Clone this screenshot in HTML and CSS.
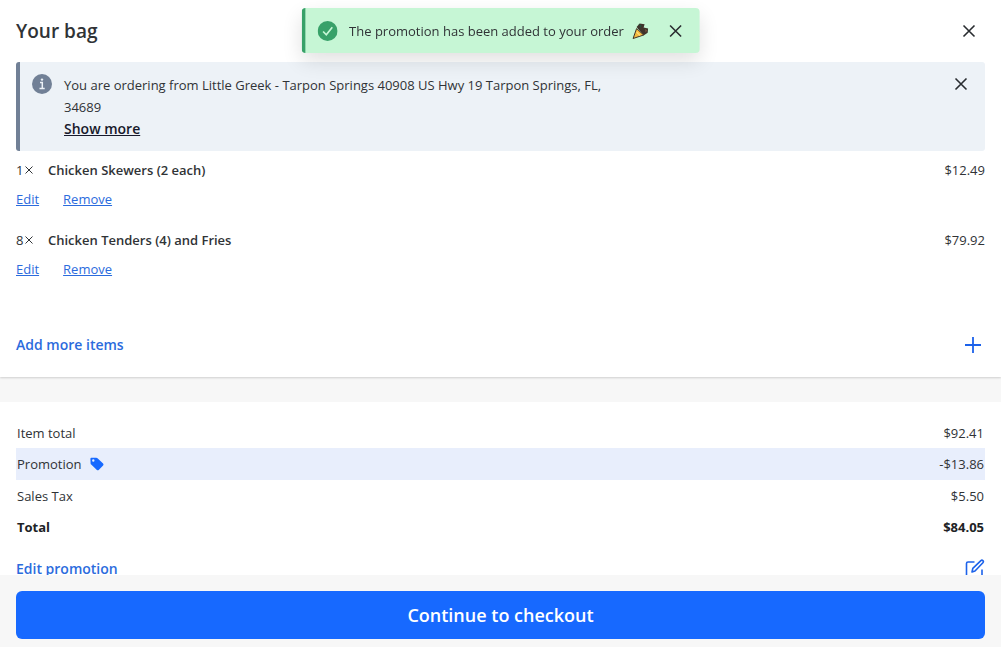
FILE: index.html
```html
<!DOCTYPE html>
<html lang="en">
<head>
<meta charset="utf-8">
<meta name="viewport" content="width=device-width, initial-scale=1">
<title>Your bag</title>
<link rel="stylesheet" href="styles.css">
</head>
<body>
<div class="bag">
  <main class="bag-scroll">
    <section class="order">
      <header class="bag-header">
        <h1 class="bag-title">Your bag</h1>
        <button class="icon-button" type="button" aria-label="Close bag">
          <svg class="cross" viewBox="0 0 14 14"><path d="M1.5 1.5l11 11M12.5 1.5l-11 11"/></svg>
        </button>
      </header>
      <div class="notice">
        <svg class="badge" viewBox="0 0 20 20"><circle cx="10" cy="10" r="10" fill="#718096"/><path d="M8 8.5h2.3v6M7.5 14.5h5.2" fill="none" stroke="#edf2f7" stroke-width="1.5"/><circle cx="10" cy="5.6" r="1.2" fill="#edf2f7"/></svg>
        <div class="notice-body">
          <p class="notice-text">You are ordering from Little Greek - Tarpon Springs 40908 US Hwy 19 Tarpon Springs, FL, 34689</p>
          <button class="show-more" type="button">Show more</button>
        </div>
        <button class="icon-button" type="button" aria-label="Dismiss notice">
          <svg class="cross" viewBox="0 0 14 14"><path d="M1.5 1.5l11 11M12.5 1.5l-11 11"/></svg>
        </button>
      </div>
      <ul class="items">
        <li class="item">
          <div class="item-line">
            <span class="quantity">1<svg class="times" viewBox="0 0 8 8"><path d="M.5.5l7 7M7.5.5l-7 7"/></svg></span>
            <span class="item-name">Chicken Skewers (2 each)</span>
            <span>$12.49</span>
          </div>
          <div class="item-actions"><a class="link" href="#">Edit</a><a class="link" href="#">Remove</a></div>
        </li>
        <li class="item">
          <div class="item-line">
            <span class="quantity">8<svg class="times" viewBox="0 0 8 8"><path d="M.5.5l7 7M7.5.5l-7 7"/></svg></span>
            <span class="item-name">Chicken Tenders (4) and Fries</span>
            <span>$79.92</span>
          </div>
          <div class="item-actions"><a class="link" href="#">Edit</a><a class="link" href="#">Remove</a></div>
        </li>
      </ul>
      <button class="action add-more" type="button">
        <span>Add more items</span>
        <svg class="action-icon" viewBox="0 0 24 24"><path d="M12 4v16M4 12h16" fill="none" stroke="#1c62ea" stroke-width="1.8"/></svg>
      </button>
    </section>
    <section class="summary">
      <table class="totals">
        <tbody>
          <tr><th scope="row">Item total</th><td>$92.41</td></tr>
          <tr class="promotion">
            <th scope="row"><span class="tagged">Promotion
              <svg class="tag" viewBox="0 0 14 14"><path fill="#1769ff" fill-rule="evenodd" d="M1.3.8l5-.1q.7 0 1.2.5l5.6 5.4q.9.9 0 1.8l-4.4 4.500q-.9.9-1.800 0L1.2 7.600Q.7 7.100.6 6.400L.4 1.900Q.4.8 1.300.8zM3.300 2.300a1.200 1.200 0 1 0 0 2.400a1.200 1.200 0 1 0 0-2.400z"/></svg></span></th>
            <td>-$13.86</td>
          </tr>
          <tr><th scope="row">Sales Tax</th><td>$5.50</td></tr>
          <tr class="total"><th scope="row">Total</th><td>$84.05</td></tr>
        </tbody>
      </table>
      <button class="action" type="button">
        <span>Edit promotion</span>
        <svg class="action-icon edit-icon" viewBox="0 0 20 20"><path d="M9.500 3H3q-1.500 0-1.500 1.500V17q0 1.500 1.500 1.500h12.500q1.500 0 1.500-1.500v-6.500M7 13l.8-3.600L15.900 1.600q1-.9 2 0t0 2.200L10 12z" fill="none" stroke="#1c62ea" stroke-width="1.600" stroke-linejoin="round"/></svg>
      </button>
    </section>
  </main>
  <footer class="bag-footer">
    <button class="checkout" type="button">Continue to checkout</button>
  </footer>
</div>
<div class="toast" role="status">
  <svg class="badge" viewBox="0 0 20 20"><circle cx="10" cy="10" r="10" fill="#38a169"/><path d="M5.500 10.500l3.200 3.300 6-7.600" fill="none" stroke="#c6f6d5" stroke-width="1.700"/></svg>
  <span class="toast-text">The promotion has been added to your order
    <svg class="popper" viewBox="0 0 18 18"><path d="M5 5l3-3.500 5 .8-1 3.200 4.500 1-.4 4.300-4.100 2.700z" fill="#3f332b"/><path d="M7 2l3 1.500-1 2.500z" fill="#244d3c"/><path d="M13.500 7l2 1.500-1.500 2z" fill="#80523d"/><path d="M5 6.500l7 6.500L1.500 16.500z" fill="#f4b83e" stroke="#3f332b" stroke-width="1" stroke-linejoin="round"/><path d="M5 10l3.500 3.500" stroke="#ffdb75" stroke-width="1.300"/></svg></span>
  <button class="icon-button" type="button" aria-label="Close message">
    <svg class="cross" viewBox="0 0 14 14"><path d="M1.5 1.5l11 11M12.5 1.5l-11 11"/></svg>
  </button>
</div>
</body>
</html>
```
FILE: styles.css
```css
* {
  box-sizing: border-box;
}

body {
  margin: 0;
  background: #f7f7f7;
  color: #303336;
  font: 13px/22px "Segoe UI", "Open Sans", "Noto Sans", sans-serif;
}

button {
  padding: 0;
  border: 0;
  background: none;
  color: inherit;
  font: inherit;
  cursor: pointer;
}

h1,
p,
ul {
  margin: 0;
  padding: 0;
}

svg {
  display: block;
  flex: none;
}

.bag {
  display: flex;
  flex-direction: column;
  height: 100vh;
}

.bag-scroll {
  flex: 1;
  min-height: 0;
  overflow: hidden;
}

.order {
  padding: 0 16px;
  background: #fff;
  box-shadow: 0 1px 2px rgba(0, 0, 0, 0.16);
}

.bag-header {
  display: flex;
  align-items: center;
  justify-content: space-between;
  height: 62px;
}

.bag-title {
  font-size: 19px;
  line-height: 28px;
  font-weight: 600;
}

.icon-button {
  display: grid;
  place-items: center;
  width: 32px;
  height: 32px;
  flex: none;
}

.cross {
  width: 14px;
  height: 14px;
  fill: none;
  stroke: #292c30;
  stroke-width: 1.6;
}

.notice {
  display: flex;
  align-items: flex-start;
  padding: 12px 8px 11px 12px;
  border-left: 4px solid #718096;
  border-radius: 3px;
  background: #edf2f7;
}

.notice .icon-button {
  height: 20px;
  margin-left: auto;
}

.badge {
  width: 20px;
  height: 20px;
}

.notice-body {
  flex: 0 1 560px;
  margin-left: 12px;
}

.show-more {
  display: block;
  color: #17192b;
  font-size: 14px;
  font-weight: 600;
  text-decoration: underline;
}

.items {
  margin-bottom: 22px;
  list-style: none;
}

.item {
  padding: 8px 0 11px;
}

.item-line {
  display: flex;
}

.quantity {
  display: flex;
  align-items: center;
  gap: 2px;
  width: 32px;
}

.times {
  width: 8px;
  height: 8px;
  fill: none;
  stroke: #303336;
  stroke-width: 1;
}

.item-name {
  flex: 1;
  font-weight: 600;
}

.item-actions {
  display: flex;
  gap: 24px;
  margin-top: 7px;
}

.link {
  color: #2b6bdd;
}

.action {
  display: flex;
  align-items: center;
  justify-content: space-between;
  width: 100%;
  color: #2b6bdd;
  font-size: 14px;
  font-weight: 600;
}

.add-more {
  height: 64px;
}

.action-icon {
  width: 24px;
  height: 24px;
}

.edit-icon {
  width: 20px;
  height: 20px;
}

.summary {
  margin-top: 25px;
  padding: 15px 16px 16px;
  background: #fff;
}

.totals {
  width: 100%;
  margin-bottom: 16px;
  border-collapse: collapse;
}

.totals th,
.totals td {
  height: 31px;
  padding: 0 1px;
  font-weight: 400;
  text-align: left;
}

.totals td {
  text-align: right;
}

.totals .promotion th,
.totals .promotion td {
  height: 32px;
  background: #e8eefc;
}

.tagged {
  display: flex;
  align-items: center;
  gap: 8px;
}

.tag {
  width: 14px;
  height: 14px;
}

.totals .total th,
.totals .total td {
  color: #202225;
  font-weight: 700;
}

.bag-footer {
  padding: 16px 16px 8px;
  background: #f7f7f7;
}

.checkout {
  display: block;
  width: 100%;
  height: 48px;
  border-radius: 6px;
  background: #1769ff;
  color: #fff;
  font-size: 18px;
  font-weight: 600;
}

.toast {
  position: fixed;
  top: 8px;
  left: 50%;
  display: flex;
  align-items: center;
  height: 45px;
  padding: 0 8px 0 12px;
  border-left: 4px solid #38a169;
  border-radius: 4px;
  background: #c6f6d5;
  box-shadow: 0 8px 20px rgba(0, 0, 0, 0.12);
  transform: translateX(-50%);
  white-space: nowrap;
}

.toast-text {
  display: flex;
  align-items: center;
  gap: 8px;
  margin: 0 10px 0 12px;
}

.popper {
  width: 18px;
  height: 18px;
}
```
